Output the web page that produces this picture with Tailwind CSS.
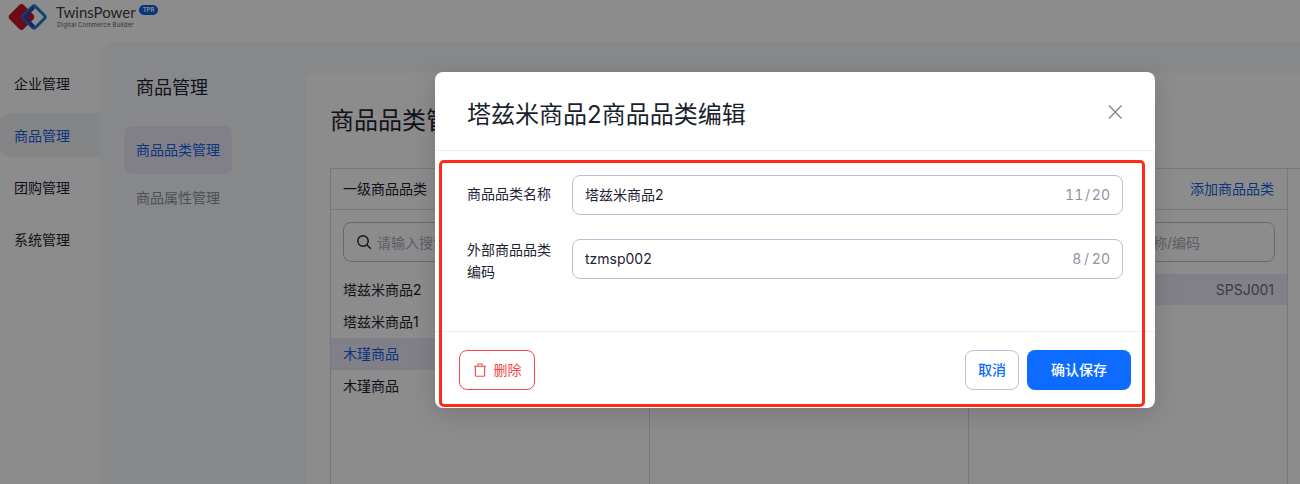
<!DOCTYPE html>
<html lang="zh">
<head>
<meta charset="utf-8">
<script src="https://cdn.jsdelivr.net/npm/@tailwindcss/browser@4"></script>
</head>
<body class="m-0">
<div class="relative w-[1300px] h-[484px] overflow-hidden bg-white text-[14px] text-[#1f2433] font-['Inter','Noto_Sans_CJK_SC',sans-serif]">
  <!-- header -->
  <header class="h-[42px] pl-[7px] flex items-start">
    <svg class="w-[42px] h-[32px] mt-[1px]" viewBox="0 0 42 32" fill="none">
      <rect x="4.5" y="6" width="20" height="20" rx="3.5" transform="rotate(45 14.5 16)" fill="#c8152c"/>
      <rect x="18.5" y="7.5" width="17" height="17" rx="2.5" transform="rotate(45 27 16)" stroke="#1d7ad6" stroke-width="3"/>
      <path d="M27 6.5 L17.5 16 L27 25.5" stroke="#2c45b8" stroke-width="3" fill="none"/>
    </svg>
    <div class="ml-[7px] mt-[3px] w-[82px]">
      <div class="text-[15px] leading-[18px] text-[#3a3f4b] font-['Lato','Inter',sans-serif] whitespace-nowrap">TwinsPower</div>
      <div class="text-[6px] leading-[8px] ml-[1px] text-[#5b6270] tracking-[0.2px] whitespace-nowrap">Digital Commerce Builder</div>
    </div>
    <div class="ml-[1px] mt-[5px] w-[19px] h-[10px] rounded-full bg-[#0d62e0] text-white text-[6px] leading-[10px] text-center font-semibold">TPR</div>
  </header>
  <div class="flex h-[442px]">
    <!-- main nav -->
    <nav class="w-[100px] shrink-0 pt-[19px]">
      <div class="h-[44px] mb-[8px] flex items-center pl-[14px]">企业管理</div>
      <div class="h-[44px] mb-[8px] flex items-center pl-[14px] bg-[#f1f2f5] rounded-l-[10px] text-[#1463e6]">商品管理</div>
      <div class="h-[44px] mb-[8px] flex items-center pl-[14px]">团购管理</div>
      <div class="h-[44px] flex items-center pl-[14px]">系统管理</div>
    </nav>
    <div class="flex-1 flex bg-[#f6f7f9] rounded-tl-[16px] min-w-0">
      <!-- sub nav -->
      <aside class="w-[206px] shrink-0 pl-[24px] pr-[74px]">
        <h2 class="text-[18px] leading-[26px] font-normal pl-[12px] mt-[33px]">商品管理</h2>
        <div class="mt-[25px] h-[48px] flex items-center pl-[12px] pb-[2px] rounded-[8px] bg-[#eceaf8] text-[#1463e6] whitespace-nowrap">商品品类管理</div>
        <div class="h-[48px] flex items-center pl-[12px] pb-[2px] text-[#8f93a3] whitespace-nowrap">商品属性管理</div>
      </aside>
      <!-- panel -->
      <main class="flex-1 min-w-0 mt-[31px] bg-white rounded-tl-[8px] pl-[24px]">
        <h1 class="text-[24px] leading-[36px] font-normal mt-[30px] whitespace-nowrap">商品品类管理</h1>
        <div class="mt-[29px] flex border-t border-l border-[#d5dae6] h-[400px]">
          <section class="w-[319px] shrink-0 border-r border-[#d5dae6]">
            <div class="h-[41px] px-[12px] pb-[2px] flex items-center border-b border-[#d5dae6]">一级商品品类</div>
            <div class="mx-[12px] mt-[12px] h-[40px] rounded-[8px] border border-[#b8c2d6] flex items-center pl-[12px] gap-[5px] text-[#a8adba]">
              <svg class="w-[16px] h-[16px] shrink-0" viewBox="0 0 16 16" fill="none" stroke="#1f2433" stroke-width="1.4"><circle cx="7" cy="7" r="5.2"/><path d="M11 11l3.8 3.8"/></svg>
              <span class="whitespace-nowrap">请输入搜索</span>
            </div>
            <div class="mt-[12px]">
              <div class="h-[32px] flex items-center px-[12px] pb-[2px]">塔兹米商品2</div>
              <div class="h-[32px] flex items-center px-[12px] pb-[2px]">塔兹米商品1</div>
              <div class="h-[32px] flex items-center px-[12px] pb-[2px] bg-[#eceaf8] text-[#1463e6]">木瑾商品</div>
              <div class="h-[32px] flex items-center px-[12px] pb-[2px]">木瑾商品</div>
            </div>
          </section>
          <section class="w-[319px] shrink-0 border-r border-[#d5dae6]">
            <div class="h-[41px] border-b border-[#d5dae6]"></div>
          </section>
          <section class="w-[319px] shrink-0 border-r border-[#d5dae6]">
            <div class="h-[41px] px-[13px] pb-[2px] flex items-center justify-end border-b border-[#d5dae6] text-[#1463e6]">添加商品品类</div>
            <div class="mx-[12px] mt-[12px] h-[40px] rounded-[8px] border border-[#b8c2d6] flex items-center justify-end pr-[74px] text-[#a8adba]">称/编码</div>
            <div class="mt-[12px] h-[31px] bg-[#eceaf8] flex items-center justify-end pr-[13px] text-[#6b7080]">SPSJ001</div>
          </section>
        </div>
      </main>
    </div>
  </div>
  <!-- overlay -->
  <div class="absolute inset-0 bg-black/45"></div>
  <!-- modal -->
  <div class="absolute left-[435px] top-[72px] w-[720px] h-[336px] bg-white rounded-[8px] shadow-[0_6px_24px_rgba(0,0,0,0.15)] flex flex-col">
    <div class="h-[79px] shrink-0 border-b border-[#eceef2] flex items-center justify-between pl-[32px] pr-[32px]">
      <div class="text-[24px] leading-[36px] font-normal whitespace-nowrap text-[#1a1f2e] mt-[8px]">塔兹米商品2商品品类编辑</div>
      <svg class="w-[16px] h-[16px] mt-[2px]" viewBox="0 0 16 16" fill="none" stroke="#7d8296" stroke-width="1.3"><path d="M2 1.5l12.5 13M14.5 1.5L2 14.5"/></svg>
    </div>
    <div class="h-[181px] shrink-0 border-b border-[#eceef2] pt-[24px] pl-[32px] pr-[32px]">
      <div class="flex items-center h-[40px]">
        <label class="w-[105px] shrink-0 leading-[22px] pb-[2px]">商品品类名称</label>
        <div class="flex-1 h-[40px] rounded-[8px] border border-[#b8c2d6] flex items-center justify-between px-[12px] pb-[2px]">
          <span>塔兹米商品2</span><span class="text-[#8f93a3] tabular-nums [word-spacing:-2px]">11 / 20</span>
        </div>
      </div>
      <div class="flex items-center h-[40px] mt-[24px]">
        <label class="w-[105px] shrink-0 leading-[22px] pr-[16px] mt-[4px]">外部商品品类编码</label>
        <div class="flex-1 h-[40px] rounded-[8px] border border-[#b8c2d6] flex items-center justify-between px-[12px] pb-[2px]">
          <span>tzmsp002</span><span class="text-[#8f93a3] tabular-nums [word-spacing:-1px]">8 / 20</span>
        </div>
      </div>
    </div>
    <div class="flex-1 flex items-start justify-between pt-[18px] pl-[24px] pr-[24px]">
      <button class="w-[76px] h-[40px] rounded-[8px] border border-[#f5474a] text-[#f5474a] flex items-center justify-center gap-[7px] pb-[2px]">
        <svg class="w-[14px] h-[14px] mt-[2px]" viewBox="0 0 14 14" fill="none" stroke="#f5474a" stroke-width="1.1"><path d="M1 3.2h12M4.6 3.2l.6-2.2h3.6l.6 2.2M2.4 3.2v9a1 1 0 0 0 1 1h7.2a1 1 0 0 0 1-1v-9"/></svg>
        <span>删除</span>
      </button>
      <div class="flex gap-[8px]">
        <button class="w-[54px] h-[40px] rounded-[8px] border border-[#b8c2d6] text-[#0d6bff] font-medium pb-[2px]">取消</button>
        <button class="w-[104px] h-[40px] rounded-[8px] bg-[#0d6bff] text-white font-medium pb-[2px]">确认保存</button>
      </div>
    </div>
    <!-- annotation -->
    <div class="absolute left-[4px] top-[88px] w-[706px] h-[247px] border-[3px] border-[#ff2a17] rounded-[5px] pointer-events-none"></div>
  </div>
</div>
</body>
</html>
